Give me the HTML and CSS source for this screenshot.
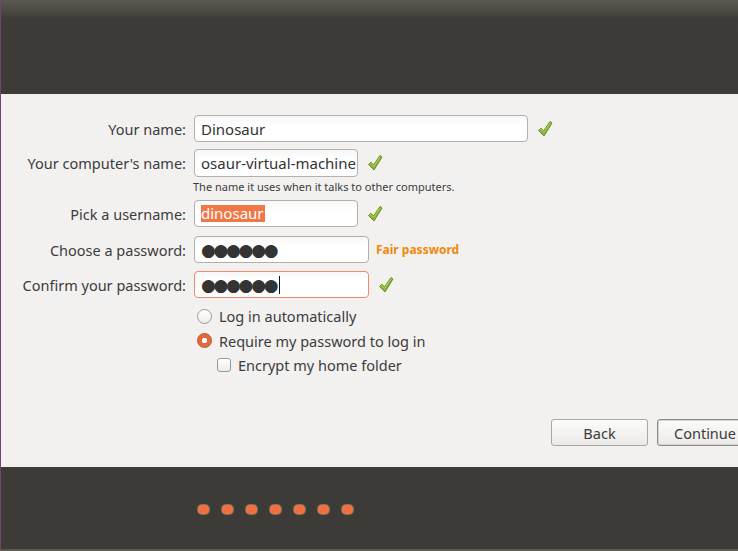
FILE: index.html
```html
<!DOCTYPE html>
<html>
<head>
<meta charset="utf-8">
<link rel="stylesheet" href="styles.css">
</head>
<body>
<div class="window">
  <header class="topbar"></header>
  <main class="content">
    <div class="form">
      <div class="row r1">
        <label class="lbl">Your name:</label>
        <div class="field w-name">Dinosaur</div>
        <svg class="check" viewBox="0 0 16 18"><path d="M1.5 10.5 L4 8.2 L6.5 11 L13 1.5 L15 3 L7 16 Z" fill="#8bb536" stroke="#6b8f24" stroke-width="1" stroke-linejoin="round"/><path d="M2.8 10.4 L4 9.4 L6.6 12.3 L13.1 2.8" fill="none" stroke="#b6d86a" stroke-width="0.8"/></svg>
      </div>
      <div class="row r2">
        <label class="lbl">Your computer's name:</label>
        <div class="field w-comp">osaur-virtual-machine</div>
        <svg class="check" viewBox="0 0 16 18"><path d="M1.5 10.5 L4 8.2 L6.5 11 L13 1.5 L15 3 L7 16 Z" fill="#8bb536" stroke="#6b8f24" stroke-width="1" stroke-linejoin="round"/><path d="M2.8 10.4 L4 9.4 L6.6 12.3 L13.1 2.8" fill="none" stroke="#b6d86a" stroke-width="0.8"/></svg>
      </div>
      <div class="hint">The name it uses when it talks to other computers.</div>
      <div class="row r3">
        <label class="lbl">Pick a username:</label>
        <div class="field w-user"><span class="sel">dinosaur</span></div>
        <svg class="check" viewBox="0 0 16 18"><path d="M1.5 10.5 L4 8.2 L6.5 11 L13 1.5 L15 3 L7 16 Z" fill="#8bb536" stroke="#6b8f24" stroke-width="1" stroke-linejoin="round"/><path d="M2.8 10.4 L4 9.4 L6.6 12.3 L13.1 2.8" fill="none" stroke="#b6d86a" stroke-width="0.8"/></svg>
      </div>
      <div class="row r4">
        <label class="lbl">Choose a password:</label>
        <div class="field w-pass"><span class="dots">●●●●●●</span></div>
        <span class="strength">Fair password</span>
      </div>
      <div class="row r5">
        <label class="lbl">Confirm your password:</label>
        <div class="field w-pass focus"><span class="dots">●●●●●●</span><span class="caret"></span></div>
        <svg class="check" viewBox="0 0 16 18"><path d="M1.5 10.5 L4 8.2 L6.5 11 L13 1.5 L15 3 L7 16 Z" fill="#8bb536" stroke="#6b8f24" stroke-width="1" stroke-linejoin="round"/><path d="M2.8 10.4 L4 9.4 L6.6 12.3 L13.1 2.8" fill="none" stroke="#b6d86a" stroke-width="0.8"/></svg>
      </div>
      <div class="options">
        <div class="opt o1"><span class="radio"></span><span>Log in automatically</span></div>
        <div class="opt o2"><span class="radio on"></span><span>Require my password to log in</span></div>
        <div class="opt o3"><span class="box"></span><span>Encrypt my home folder</span></div>
      </div>
    </div>
    <div class="buttons">
      <button class="btn back">Back</button>
      <button class="btn cont">Continue</button>
    </div>
  </main>
  <footer class="bottombar">
    <div class="progress">
      <span class="dot"></span><span class="dot"></span><span class="dot"></span><span class="dot"></span><span class="dot"></span><span class="dot"></span><span class="dot"></span>
    </div>
  </footer>
</div>
</body>
</html>
```
FILE: styles.css
```css
html, body {
  margin: 0;
  padding: 0;
  width: 738px;
  height: 551px;
  overflow: hidden;
  background: #3c3b37;
}
.window {
  width: 738px;
  height: 551px;
  display: flex;
  flex-direction: column;
  border-left: 1px solid #7b3f70;
  box-sizing: border-box;
  border-bottom: 2px solid #5c5a4f;
  font-family: "Noto Sans", "Open Sans", sans-serif;
  color: #3c3c3c;
  font-size: 14.5px;
}
.topbar {
  height: 94px;
  flex: none;
  background: linear-gradient(to bottom, #5b5851 0px, #4a4842 12px, #3d3c38 18px, #3c3b37 94px);
}
.content {
  height: 373px;
  flex: none;
  background: #f2f1f0;
  display: flex;
  flex-direction: column;
}
.form {
  padding-top: 21px;
  display: flex;
  flex-direction: column;
}
.row {
  display: flex;
  align-items: center;
  gap: 8px;
}
.lbl {
  width: 185px;
  flex: none;
  text-align: right;
  white-space: nowrap;
}
.field {
  box-sizing: border-box;
  height: 27px;
  border: 1px solid #b3b0ab;
  border-radius: 4px;
  background: linear-gradient(to bottom, #f7f7f7, #ffffff 40%);
  padding: 0 6px;
  display: flex;
  align-items: center;
  white-space: nowrap;
  overflow: hidden;
  color: #333;
  font-size: 15px;
}
.w-name { width: 334px; }
.w-comp { width: 164px; height: 28px; }
.w-user { width: 164px; }
.w-pass { width: 175px; }
.focus { border-color: #ef8a6a; }
.check { width: 16px; height: 18px; margin-left: 1px; }
.r2 { margin-top: 7px; }
.hint {
  margin-left: 192px;
  margin-top: 2px;
  font-size: 11px;
  line-height: 15px;
  color: #3c3c3c;
}
.r3 { margin-top: 6px; }
.r4 { margin-top: 9px; }
.r5 { margin-top: 8px; }
.sel {
  background: #f07746;
  color: #fff;
  line-height: 17px;
  padding: 0 1px 0 0;
}
.dots {
  font-family: "DejaVu Sans", sans-serif;
  font-size: 17px;
  letter-spacing: -2.3px;
  color: #333;
  line-height: 20px;
}
.caret {
  display: inline-block;
  width: 1px;
  height: 18px;
  background: #111;
  margin-left: 3px;
}
.strength {
  color: #f0880a;
  font-weight: bold;
  font-size: 12px;
  margin-left: -1px;
}
.options {
  margin-left: 196px;
  margin-top: 6px;
  display: flex;
  flex-direction: column;
  font-size: 14.5px;
}
.opt {
  display: flex;
  align-items: center;
  gap: 7px;
  height: 24.5px;
}
.radio {
  box-sizing: border-box;
  width: 15px;
  height: 15px;
  border-radius: 50%;
  border: 1px solid #9c9a96;
  background: linear-gradient(to bottom, #ffffff, #ececeb);
  flex: none;
}
.radio.on {
  border-color: #b9532c;
  background: radial-gradient(circle, #ffffff 0 2.5px, #e26a3c 3px);
}
.o3 { margin-left: 20px; }
.box {
  box-sizing: border-box;
  width: 14px;
  height: 14px;
  border-radius: 3px;
  border: 1px solid #9c9a96;
  background: linear-gradient(to bottom, #ffffff, #ececeb);
  flex: none;
}
.buttons {
  margin-top: auto;
  margin-bottom: 21px;
  display: flex;
  gap: 9px;
  padding-left: 550px;
}
.btn {
  box-sizing: border-box;
  height: 27px;
  border: 1px solid #a9a7a2;
  border-radius: 3px;
  background: linear-gradient(to bottom, #fbfbfa, #ebeae8);
  font-family: "Noto Sans", "Open Sans", sans-serif;
  font-size: 14.5px;
  color: #3c3c3c;
  padding: 0;
  flex: none;
}
.back { width: 97px; }
.cont {
  width: 100px;
  border-color: #8d8b86;
  box-shadow: inset 0 0 0 1px #d6d4d0;
  text-align: left;
  padding-left: 16px;
}
.bottombar {
  flex: 1;
  background: #3c3b37;
  display: flex;
  align-items: flex-start;
}
.progress {
  margin-left: 197px;
  margin-top: 38px;
  display: flex;
  gap: 13px;
}
.dot {
  width: 11px;
  height: 9px;
  border-radius: 4px;
  background: #ef6f3f;
  box-shadow: 0 0 0 1px #7c7266;
}
```
